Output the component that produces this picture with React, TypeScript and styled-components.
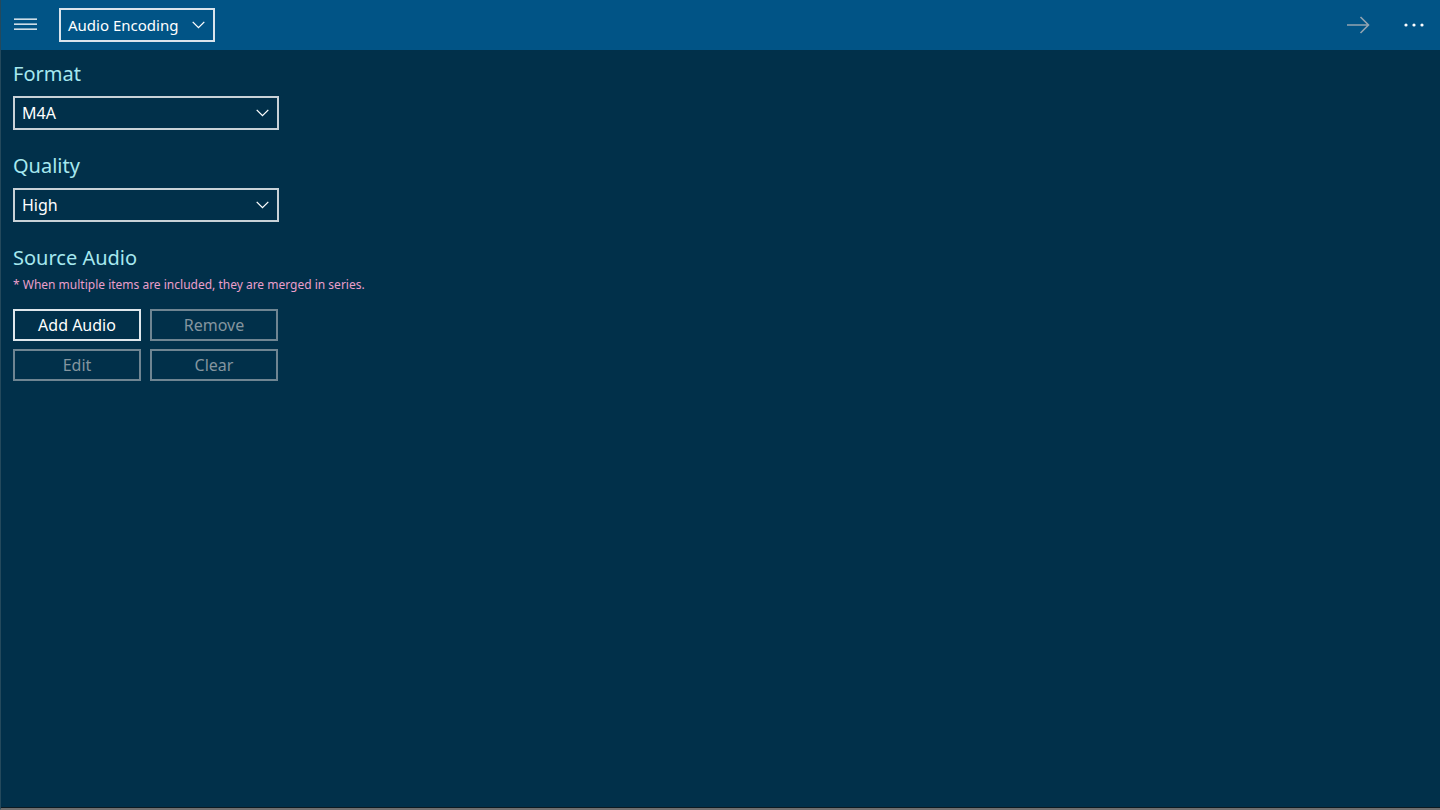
import React from "react";
import styled, { createGlobalStyle } from "styled-components";

const GlobalStyle = createGlobalStyle`
  html, body { margin: 0; padding: 0; background: #01304a; }
  body { font-family: "Noto Sans", "Open Sans", sans-serif; }
  * { box-sizing: border-box; }
`;

const Frame = styled.div`
  width: 1440px;
  height: 810px;
  display: flex;
  flex-direction: column;
  background: #01304a;
  border-left: 1px solid #24495c;
  border-bottom: 2px solid #6f6f6f;
  box-shadow: inset 0 -1px 0 #0b1a22;
  overflow: hidden;
`;

const TopBar = styled.header`
  height: 50px;
  flex: none;
  display: flex;
  align-items: center;
  padding: 0 13px 0 13px;
  background: #015486;
`;

const IconButton = styled.button`
  width: 24px;
  height: 24px;
  padding: 0;
  border: 0;
  background: transparent;
  display: flex;
  align-items: center;
  justify-content: center;
  color: #ffffff;
`;

const HeaderSelect = styled.div`
  margin-left: 21px;
  width: 156px;
  height: 34px;
  border: 2px solid #d9e4ec;
  display: flex;
  align-items: center;
  justify-content: space-between;
  padding: 0 8px 0 7px;
  color: #ffffff;
  font-size: 15px;
`;

const Spacer = styled.div`
  flex: 1;
`;

const RightIcons = styled.div`
  display: flex;
  align-items: center;
  gap: 34px;
  margin-right: 3px;
`;

const Content = styled.main`
  display: flex;
  flex-direction: column;
  padding: 10px 0 0 12px;
`;

const Label = styled.div<{ $top: number }>`
  margin-top: ${(p) => p.$top}px;
  height: 28px;
  line-height: 28px;
  font-size: 20px;
  color: #a6e8ef;
`;

const Select = styled.div`
  margin-top: 8px;
  width: 266px;
  height: 34px;
  border: 2px solid #c9d2d8;
  display: flex;
  align-items: center;
  justify-content: space-between;
  padding: 0 8px 0 7px;
  color: #ffffff;
  font-size: 16px;
`;

const Note = styled.div`
  margin-top: 5px;
  height: 16px;
  line-height: 16px;
  font-size: 12px;
  color: #ea9fcb;
`;

const ButtonGrid = styled.div`
  margin-top: 16px;
  display: grid;
  grid-template-columns: 128px 128px;
  grid-auto-rows: 32px;
  column-gap: 9px;
  row-gap: 8px;
`;

const ActionButton = styled.button<{ $enabled?: boolean }>`
  font-family: inherit;
  font-size: 16px;
  background: transparent;
  border: 2px solid ${(p) => (p.$enabled ? "#dfe7ec" : "#6f8592")};
  color: ${(p) => (p.$enabled ? "#ffffff" : "#84959f")};
  padding: 0;
  display: flex;
  align-items: center;
  justify-content: center;
`;

const Chevron = () => (
  <svg width="13" height="8" viewBox="0 0 13 8" fill="none">
    <path d="M0.7 0.9 L6.5 6.7 L12.3 0.9" stroke="#ffffff" strokeWidth="1.3" />
  </svg>
);

const Hamburger = () => (
  <svg width="24" height="14" viewBox="0 0 24 14">
    <rect x="0" y="0.5" width="23" height="1.3" fill="#ffffff" />
    <rect x="0" y="5.5" width="23" height="1.3" fill="#ffffff" />
    <rect x="0" y="10.5" width="23" height="1.3" fill="#ffffff" />
  </svg>
);

const Arrow = () => (
  <svg width="23" height="18" viewBox="0 0 23 18" fill="none">
    <path d="M0 9 H21.5 M13.5 1 L21.5 9 L13.5 17" stroke="#93a4b1" strokeWidth="1.6" />
  </svg>
);

const Dots = () => (
  <svg width="20" height="4" viewBox="0 0 20 4">
    <circle cx="2" cy="2" r="1.6" fill="#ffffff" />
    <circle cx="10" cy="2" r="1.6" fill="#ffffff" />
    <circle cx="18" cy="2" r="1.6" fill="#ffffff" />
  </svg>
);

export default function App() {
  return (
    <>
      <GlobalStyle />
      <Frame>
        <TopBar>
          <IconButton aria-label="Menu">
            <Hamburger />
          </IconButton>
          <HeaderSelect>
            <span>Audio Encoding</span>
            <Chevron />
          </HeaderSelect>
          <Spacer />
          <RightIcons>
            <Arrow />
            <Dots />
          </RightIcons>
        </TopBar>
        <Content>
          <Label $top={0}>Format</Label>
          <Select>
            <span>M4A</span>
            <Chevron />
          </Select>
          <Label $top={22}>Quality</Label>
          <Select>
            <span>High</span>
            <Chevron />
          </Select>
          <Label $top={22}>Source Audio</Label>
          <Note>* When multiple items are included, they are merged in series.</Note>
          <ButtonGrid>
            <ActionButton $enabled>Add Audio</ActionButton>
            <ActionButton>Remove</ActionButton>
            <ActionButton>Edit</ActionButton>
            <ActionButton>Clear</ActionButton>
          </ButtonGrid>
        </Content>
      </Frame>
    </>
  );
}
